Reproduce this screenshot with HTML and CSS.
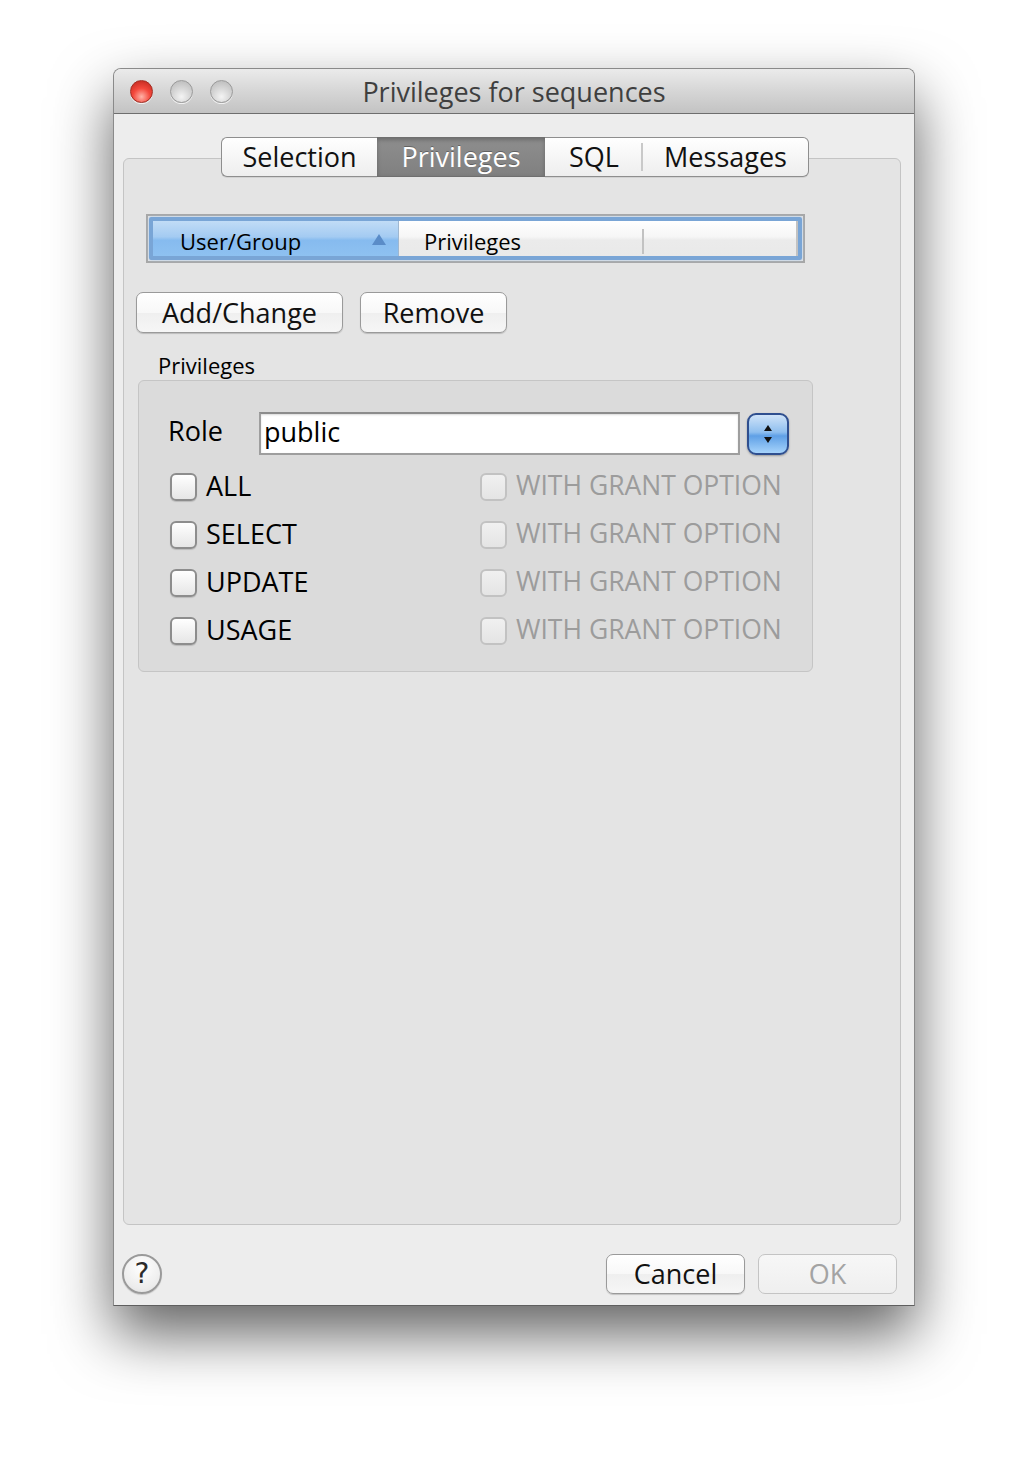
FILE: index.html
```html
<!DOCTYPE html>
<html lang="en">
<head>
    <meta charset="UTF-8">
    <title>Privileges for sequences</title>
    <link rel="stylesheet" href="styles.css">
</head>
<body>

    <div class="desktop">
        <div class="window">
            <!-- Title bar -->
            <div class="titlebar">
                <div class="lights">
                    <span class="light close"></span>
                    <span class="light"></span>
                    <span class="light"></span>
                </div>
                <div class="title">Privileges for sequences</div>
            </div>

            <div class="content">
                <!-- Tabs -->
                <div class="tabs">
                    <div class="tab tab-first" style="width:156px">Selection</div>
                    <div class="tab selected" style="width:168px">Privileges</div>
                    <div class="tab sep" style="width:98px">SQL</div>
                    <div class="tab tab-last" style="width:166px">Messages</div>
                </div>

                <div class="tabpanel">
                    <!-- List header -->
                    <div class="list">
                        <div class="list-ring">
                            <div class="col col-sorted">User/Group <span class="sort-arrow"></span></div>
                            <div class="col col-priv">Privileges</div>
                            <div class="col col-rest"></div>
                        </div>
                    </div>

                    <div class="actions">
                        <button class="btn btn-add">Add/Change</button>
                        <button class="btn btn-remove">Remove</button>
                    </div>

                    <div class="group-label">Privileges</div>
                    <div class="group">
                        <div class="role-row">
                            <span class="role-label">Role</span>
                            <div class="role-input">public</div>
                            <div class="stepper">
                                <svg width="14" height="24" viewBox="0 0 14 24">
                                    <path d="M7 3 L11 9 L3 9 Z" fill="#111"/>
                                    <path d="M7 21 L11 15 L3 15 Z" fill="#111"/>
                                </svg>
                            </div>
                        </div>

                        <div class="priv-grid">
                            <label class="check"><span class="box"></span>ALL</label>
                            <label class="check disabled"><span class="box"></span>WITH GRANT OPTION</label>
                            <label class="check"><span class="box"></span>SELECT</label>
                            <label class="check disabled"><span class="box"></span>WITH GRANT OPTION</label>
                            <label class="check"><span class="box"></span>UPDATE</label>
                            <label class="check disabled"><span class="box"></span>WITH GRANT OPTION</label>
                            <label class="check"><span class="box"></span>USAGE</label>
                            <label class="check disabled"><span class="box"></span>WITH GRANT OPTION</label>
                        </div>
                    </div>
                </div>

                <!-- Bottom bar -->
                <div class="bottombar">
                    <div class="help">?</div>
                    <div class="spacer"></div>
                    <button class="btn btn-dlg">Cancel</button>
                    <button class="btn btn-dlg btn-disabled">OK</button>
                </div>
            </div>
        </div>
    </div>

</body>
</html>
```

FILE: styles.css
```css
body {
    margin: 0;
    padding: 0;
    background-color: #ffffff;
    font-family: 'Open Sans', 'DejaVu Sans', sans-serif;
    color: #000;
}

.desktop {
    width: 1028px;
    height: 1464px;
    padding: 68px 0 0 113px;
    box-sizing: border-box;
}

.window {
    width: 802px;
    height: 1238px;
    box-sizing: border-box;
    border: 1px solid #8a8a8a;
    border-bottom-color: #5f5f5f;
    border-radius: 8px 8px 0 0;
    background-color: #ededed;
    box-shadow: 0 28px 60px rgba(0, 0, 0, 0.62);
    display: flex;
    flex-direction: column;
}

/* Title bar */
.titlebar {
    height: 44px;
    flex-shrink: 0;
    display: flex;
    align-items: center;
    position: relative;
    border-bottom: 1px solid #6e6e6e;
    border-radius: 7px 7px 0 0;
    background: linear-gradient(#ebebeb, #d6d6d6 50%, #c3c3c3);
}

.lights {
    display: flex;
    gap: 17px;
    padding-left: 16px;
}

.light {
    width: 23px;
    height: 23px;
    border-radius: 50%;
    box-sizing: border-box;
    border: 1px solid #9a9a9a;
    background: radial-gradient(circle at 50% 75%, #f4f4f4 0, #dadada 40%, #b5b5b5 100%);
    box-shadow: 0 1px 0 rgba(255, 255, 255, 0.7);
}

.light.close {
    border-color: #a32c22;
    background: radial-gradient(circle at 50% 75%, #ffb3a8 0, #f4483c 45%, #b8241b 100%);
}

.title {
    position: absolute;
    left: 0;
    right: 0;
    text-align: center;
    font-size: 27px;
    color: #3f3f3f;
    pointer-events: none;
}

/* Content */
.content {
    flex: 1;
    display: flex;
    flex-direction: column;
    padding: 23px 13px 0 9px;
}

.tabs {
    display: flex;
    height: 40px;
    margin-left: 98px;
    position: relative;
    z-index: 1;
}

.tab {
    box-sizing: border-box;
    height: 40px;
    line-height: 38px;
    text-align: center;
    font-size: 27px;
    color: #111;
    border-top: 1px solid #8e8e8e;
    border-bottom: 1px solid #8e8e8e;
    background: linear-gradient(#ffffff, #f6f6f6 50%, #eeeeee);
    box-shadow: 0 1px 0 rgba(0, 0, 0, 0.08);
}

.tab-first {
    border-left: 1px solid #8e8e8e;
    border-radius: 6px 0 0 6px;
}

.tab-last {
    border-right: 1px solid #8e8e8e;
    border-radius: 0 6px 6px 0;
}

.tab.sep {
    position: relative;
}

.tab.sep::after {
    content: "";
    position: absolute;
    right: 0;
    top: 5px;
    bottom: 5px;
    width: 2px;
    background: #c9c9c9;
}

.tab.selected {
    color: #fff;
    background: linear-gradient(#8e8e8e, #808080);
    border-color: #6f6f6f;
    box-shadow: inset 0 2px 4px rgba(0, 0, 0, 0.25);
    text-shadow: 0 -1px 0 rgba(0, 0, 0, 0.3);
}

.tabpanel {
    margin-top: -19px;
    height: 1067px;
    box-sizing: border-box;
    border: 1px solid #c4c4c4;
    border-radius: 6px;
    background-color: #e4e4e4;
    padding: 55px 0 0 0;
}

/* List header */
.list {
    width: 659px;
    height: 49px;
    margin-left: 22px;
    box-sizing: border-box;
    border: 2px solid #a7a7a7;
    padding: 1px;
}

.list-ring {
    height: 100%;
    box-sizing: border-box;
    border: 4px solid #79a5d6;
    border-radius: 2px;
    box-shadow: 0 0 3px #a9c8ea;
    display: flex;
    background: linear-gradient(#ffffff, #f6f6f6 45%, #ebebeb 55%, #e9e9e9);
}

.col {
    font-size: 22px;
    line-height: 30px;
    padding-top: 5px;
    color: #000;
    box-sizing: border-box;
}

.col-sorted {
    width: 246px;
    padding-left: 27px;
    position: relative;
    background: linear-gradient(#c1dcf6, #a4cbf2 45%, #86bbef 55%, #8ec1f1);
    border-right: 1px solid #9fb7d0;
}

.sort-arrow {
    position: absolute;
    right: 12px;
    top: 13px;
    width: 0;
    height: 0;
    border-left: 7px solid transparent;
    border-right: 7px solid transparent;
    border-bottom: 11px solid #5a8cc8;
}

.col-priv {
    width: 245px;
    padding-left: 25px;
    position: relative;
}

.col-priv::after {
    content: "";
    position: absolute;
    right: 0;
    top: 8px;
    bottom: 2px;
    width: 2px;
    background: #c2c2c2;
}

.col-rest {
    flex: 1;
    border-right: 2px solid #c2c2c2;
}

/* Buttons */
.actions {
    display: flex;
    gap: 17px;
    margin: 29px 0 0 12px;
}

.btn {
    font-family: 'Open Sans', 'DejaVu Sans', sans-serif;
    font-size: 27px;
    color: #111;
    height: 41px;
    padding: 0;
    box-sizing: border-box;
    border: 1px solid #9a9a9a;
    border-radius: 7px;
    background: linear-gradient(#ffffff, #f8f8f8 50%, #efefef 51%, #f6f6f6);
    box-shadow: 0 1px 1px rgba(0, 0, 0, 0.18);
    line-height: 38px;
}

.btn-add {
    width: 207px;
}

.btn-remove {
    width: 147px;
}

.group-label {
    font-size: 22px;
    line-height: 30px;
    margin: 17px 0 0 34px;
}

.group {
    width: 675px;
    height: 292px;
    margin-left: 14px;
    box-sizing: border-box;
    border: 1px solid #c5c5c5;
    border-radius: 6px;
    background-color: #dbdbdb;
    padding: 31px 0 0 31px;
}

.role-row {
    display: flex;
    align-items: center;
    height: 43px;
}

.role-label {
    font-size: 27px;
    width: 90px;
    margin-left: -2px;
    margin-right: 1px;
    padding-bottom: 7px;
}

.role-input {
    width: 481px;
    height: 43px;
    box-sizing: border-box;
    border: 2px solid #9e9e9e;
    border-top-color: #8c8c8c;
    background: #fff;
    box-shadow: inset 0 1px 2px rgba(0, 0, 0, 0.15);
    font-size: 27px;
    line-height: 35px;
    padding-left: 3px;
}

.stepper {
    width: 42px;
    height: 42px;
    margin-left: 7px;
    box-sizing: border-box;
    border: 2px solid #2f4f8f;
    border-radius: 9px;
    background: linear-gradient(#cfe3f8, #8fbfef 45%, #5fa0e6 55%, #a6d3fb);
    box-shadow: 0 1px 2px rgba(0, 0, 0, 0.3);
    display: flex;
    align-items: center;
    justify-content: center;
}

.priv-grid {
    display: grid;
    grid-template-columns: 310px 1fr;
    grid-auto-rows: 48px;
    margin-top: 8px;
}

.check {
    display: flex;
    align-items: center;
    font-size: 27px;
    color: #000;
    padding-bottom: 4px;
    box-sizing: border-box;
}

.box {
    width: 27px;
    height: 28px;
    box-sizing: border-box;
    border: 2px solid #8d8d8d;
    border-radius: 6px;
    background: linear-gradient(#ffffff, #f2f2f2 50%, #e6e6e6);
    box-shadow: 0 1px 1px rgba(0, 0, 0, 0.15);
    margin-right: 9px;
    margin-top: 4px;
}

.check.disabled {
    color: #9c9c9c;
    font-size: 26.5px;
}

.check.disabled .box {
    border-color: #c2c2c2;
    background: linear-gradient(#f0f0f0, #e4e4e4);
    box-shadow: none;
}

/* Bottom bar */
.bottombar {
    display: flex;
    align-items: center;
    height: 40px;
    margin-top: 29px;
    margin-right: 4px;
}

.help {
    width: 40px;
    height: 40px;
    box-sizing: border-box;
    border: 2px solid #9a9a9a;
    border-radius: 50%;
    background: radial-gradient(circle at 50% 30%, #ffffff, #ececec 70%, #dcdcdc);
    box-shadow: 0 1px 1px rgba(0, 0, 0, 0.15);
    text-align: center;
    font-family: 'DejaVu Sans', sans-serif;
    font-size: 28px;
    line-height: 36px;
    color: #2b2b2b;
    margin-left: -1px;
}

.spacer {
    flex: 1;
}

.btn-dlg {
    width: 139px;
    height: 40px;
    margin-left: 13px;
}

.btn-disabled {
    color: #a3a3a3;
    border-color: #c4c4c4;
    background: linear-gradient(#f7f7f7, #efefef);
    box-shadow: none;
}
```
